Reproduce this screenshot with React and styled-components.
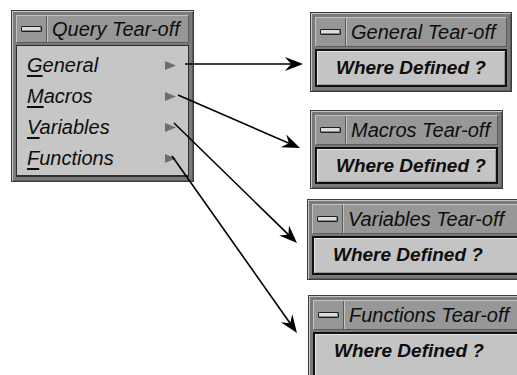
import React from "react";
import styled, {createGlobalStyle} from "styled-components";

const GlobalStyle = createGlobalStyle`
    html, body {
        margin: 0;
        background: #ffffff;
        overflow: hidden;
    }
    body {
        font-family: "Liberation Sans", Arial, sans-serif;
    }
`;

const Canvas = styled.div`
    position: relative;
    width: 517px;
    height: 375px;
    overflow: hidden;
    background: #ffffff;
`;

// windows are nodes of the diagram, placed on the canvas
const Frame = styled.div`
    position: absolute;
    left: ${(p) => p.$x}px;
    top: ${(p) => p.$y}px;
    width: ${(p) => p.$w}px;
    height: ${(p) => (p.$h ? `${p.$h}px` : "auto")};
    box-sizing: border-box;
    display: flex;
    flex-direction: column;
    gap: 2px;
    padding: 4px;
    border: 1px solid #3c3c3c;
    background-color: #979797;
    background-image: radial-gradient(#626262 0.55px, transparent 0.9px);
    background-size: 2px 2px;
    box-shadow: inset 1px 1px 0 #c8c8c8, inset -1px -1px 0 #5a5a5a;
`;

const TitleBar = styled.div`
    flex: 0 0 ${(p) => p.$h}px;
    display: flex;
    align-items: stretch;
    box-sizing: border-box;
    background: #979797;
    border: 1px solid;
    border-color: #c4c4c4 #5c5c5c #5c5c5c #c4c4c4;
`;

const DashBox = styled.div`
    flex: 0 0 29px;
    display: flex;
    align-items: center;
    justify-content: center;
    border-right: 1px solid #5c5c5c;
    box-shadow: 1px 0 0 #c4c4c4;
`;

const DashBar = styled.div`
    width: 19px;
    height: 4px;
    border: 1px solid #1e1e1e;
    border-radius: 1px;
    background: #dcdcdc;
    box-shadow: inset -1px -1px 0 #8a8a8a;
`;

const Title = styled.div`
    display: flex;
    align-items: center;
    padding-left: 5px;
    font-size: 20px;
    font-style: italic;
    color: #0e0e0e;
    white-space: nowrap;
`;

const MenuBody = styled.div`
    flex: 1;
    display: flex;
    flex-direction: column;
    padding: 4px 0 0;
    background: #c6c6c6;
    border: 1px solid #2e2e2e;
    border-bottom-width: 2px;
`;

const MenuRow = styled.div`
    height: 31px;
    display: flex;
    align-items: center;
    justify-content: space-between;
    padding: 0 12px 0 10px;
    font-size: 20px;
    font-style: italic;
    color: #0e0e0e;
`;

const Mnemonic = styled.span`
    text-decoration: underline;
    text-decoration-thickness: 2px;
    text-underline-offset: 3px;
`;

const Cascade = styled.svg`
    width: 11px;
    height: 9px;
`;

const TearButton = styled.div`
    flex: 0 0 ${(p) => p.$h}px;
    box-sizing: border-box;
    display: flex;
    align-items: flex-start;
    padding: 6px 0 0 19px;
    background: #c4c4c4;
    border: 2px solid #111111;
    box-shadow: inset 1px 1px 0 #e6e6e6, inset -1px -1px 0 #9a9a9a;
    font-size: 19px;
    line-height: 22px;
    font-weight: bold;
    font-style: italic;
    color: #0e0e0e;
    white-space: nowrap;
`;

const Arrows = styled.svg`
    position: absolute;
    left: 0;
    top: 0;
    width: 517px;
    height: 375px;
    pointer-events: none;
`;

const menuItems = ["General", "Macros", "Variables", "Functions"];

const tearOffs = [
    {name: "General", x: 310, y: 12, w: 202, b: 38},
    {name: "Macros", x: 310, y: 110, w: 193, b: 37},
    {name: "Variables", x: 307, y: 199, w: 230, b: 39},
    {name: "Functions", x: 308, y: 295, w: 230, b: 50},
];

const links = [
    [185, 64, 303, 64],
    [178, 95, 300, 148],
    [174, 123, 297, 243],
    [172, 156, 297, 333],
];

function WindowTitle({text, height}) {
    return (
        <TitleBar $h={height}>
            <DashBox>
                <DashBar />
            </DashBox>
            <Title>{text}</Title>
        </TitleBar>
    );
}

function Arrow({x1, y1, x2, y2}) {
    const len = Math.hypot(x2 - x1, y2 - y1);
    const ux = (x2 - x1) / len;
    const uy = (y2 - y1) / len;
    const nx = -uy;
    const ny = ux;
    const bx = x2 - 18 * ux;
    const by = y2 - 18 * uy;
    const kx = x2 - 12 * ux;
    const ky = y2 - 12 * uy;
    const pts = [
        [x2, y2],
        [bx + 7 * nx, by + 7 * ny],
        [kx, ky],
        [bx - 7 * nx, by - 7 * ny],
    ]
        .map((p) => p.join(","))
        .join(" ");
    return (
        <g>
            <line x1={x1} y1={y1} x2={kx} y2={ky} stroke="#000" strokeWidth="1.6" />
            <polygon points={pts} fill="#000" />
        </g>
    );
}

export default function App() {
    return (
        <>
            <GlobalStyle />
            <Canvas>
                <Frame $x={11} $y={10} $w={183} $h={172}>
                    <WindowTitle text="Query Tear-off" height={28} />
                    <MenuBody>
                        {menuItems.map((item) => (
                            <MenuRow key={item}>
                                <span>
                                    <Mnemonic>{item[0]}</Mnemonic>
                                    {item.slice(1)}
                                </span>
                                <Cascade viewBox="0 0 11 9">
                                    <polygon points="0,0 11,4.5 0,9" fill="#6e6e6e" />
                                </Cascade>
                            </MenuRow>
                        ))}
                    </MenuBody>
                </Frame>

                {tearOffs.map((t) => (
                    <Frame key={t.name} $x={t.x} $y={t.y} $w={t.w}>
                        <WindowTitle text={`${t.name} Tear-off`} height={30} />
                        <TearButton $h={t.b}>Where Defined ?</TearButton>
                    </Frame>
                ))}

                <Arrows viewBox="0 0 517 375">
                    {links.map(([x1, y1, x2, y2], i) => (
                        <Arrow key={i} x1={x1} y1={y1} x2={x2} y2={y2} />
                    ))}
                </Arrows>
            </Canvas>
        </>
    );
}
